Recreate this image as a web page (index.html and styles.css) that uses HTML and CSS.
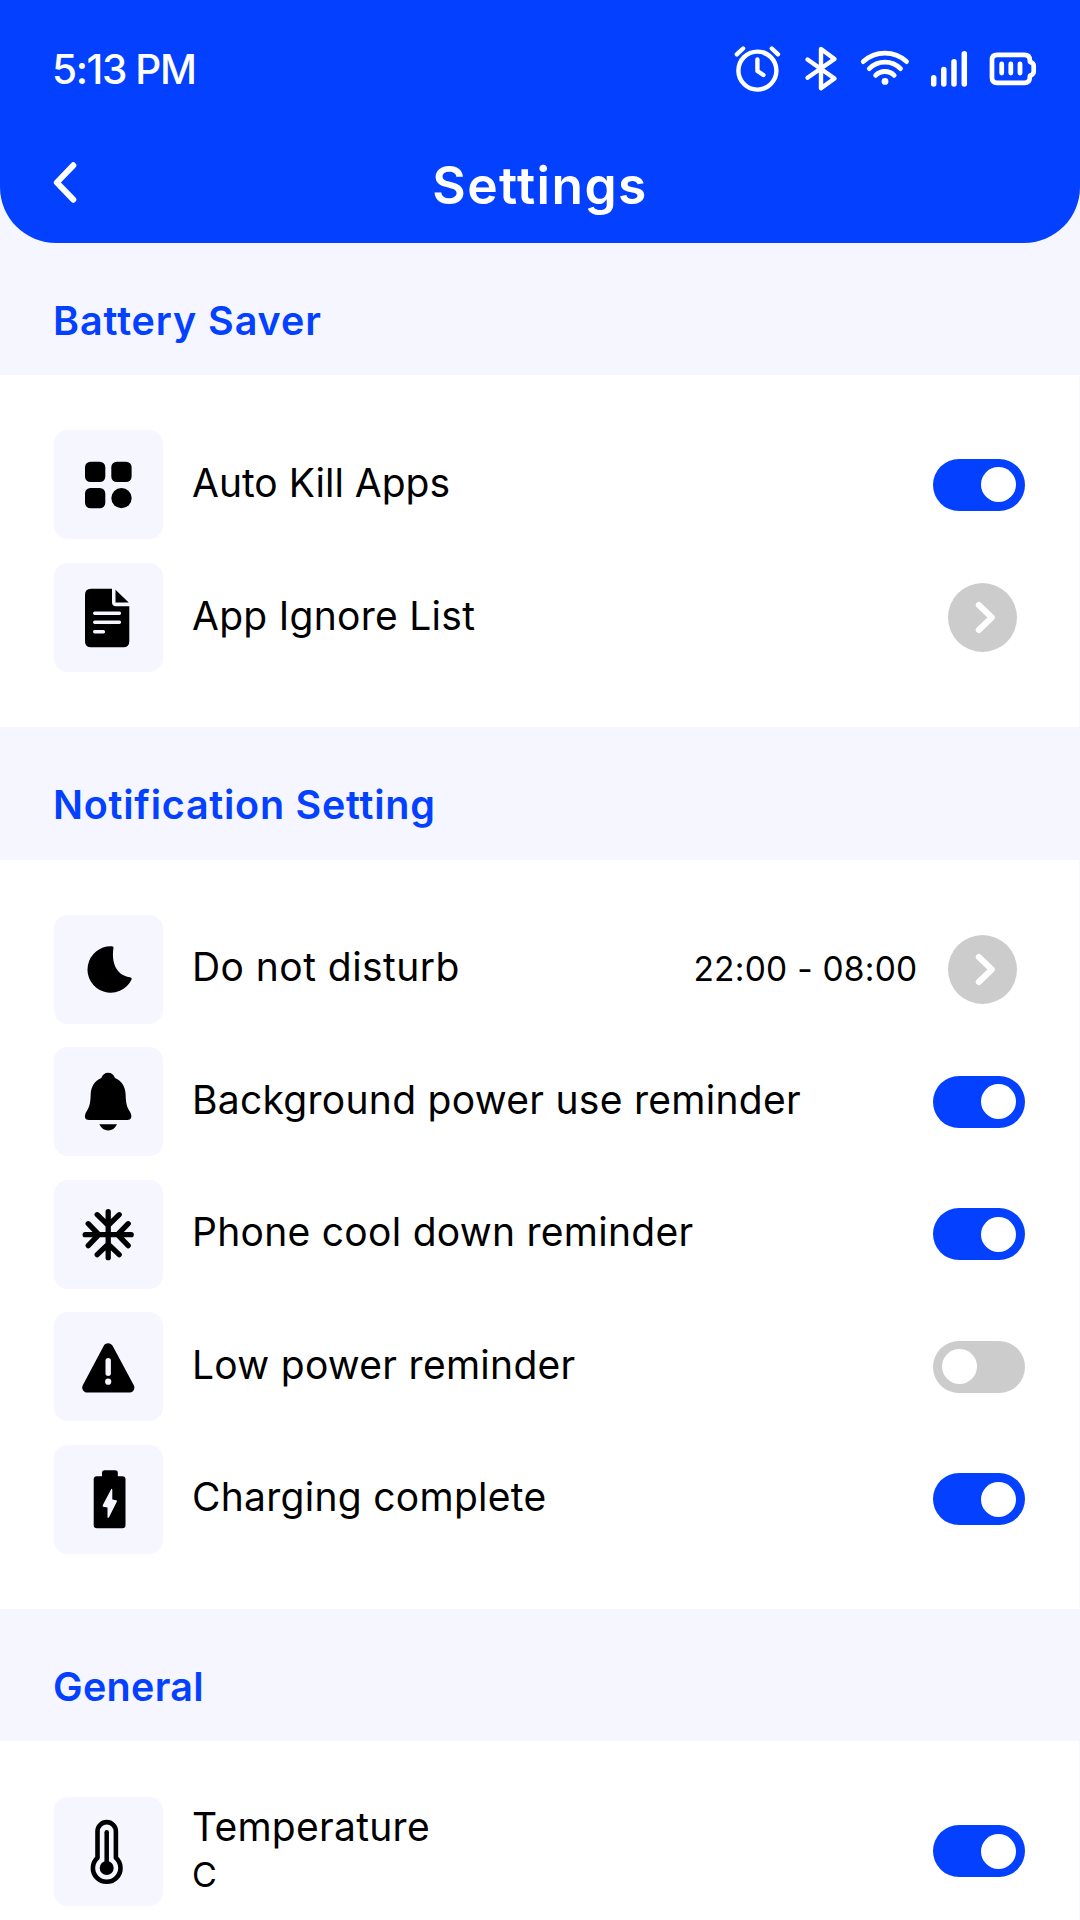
FILE: index.html
```html
<!DOCTYPE html>
<html lang="en">
<head>
  <meta charset="UTF-8">
  <title>Settings</title>
  <link rel="stylesheet" href="styles.css">
</head>
<body>

<header class="header">
  <div class="status-bar">
    <span class="time">5:13 PM</span>
    <div class="status-icons">
      <!-- alarm -->
      <svg width="48" height="46" viewBox="734 46 48 46">
        <circle cx="757.4" cy="70.6" r="19"/>
        <path d="M757.4 59.5V71l6 4M736.8 54.3l6.3-5.8M771.8 48.5l6.2 5.8"/>
      </svg>
      <!-- bluetooth -->
      <svg width="37" height="46" viewBox="802 46 37 46">
        <path d="M807.5 59.5l27 19-13.5 9.7V49l13.5 10-27 18.7"/>
      </svg>
      <!-- wifi -->
      <svg width="51" height="46" viewBox="859 46 51 46">
        <path d="M863.3 61.6a32 32 0 0 1 43.2 0M869.3 68.6a22 22 0 0 1 31.2 0M875.6 75.4a13 13 0 0 1 18.6 0" stroke-width="4.8"/>
        <circle class="solid" cx="885" cy="81.4" r="3.4"/>
      </svg>
      <!-- signal -->
      <svg width="38" height="46" viewBox="930 46 38 46">
        <path d="M933.7 77.7v6.2M943.8 69.4v14.5M954 61.7v22.2M964.3 53.7v30.2" stroke-width="5.5"/>
      </svg>
      <!-- battery -->
      <svg width="50" height="46" viewBox="988 46 50 46">
        <path d="M997 54.8h27.5q5 0 5.3 5l.2 2q3.7 1.5 3.7 4v6q0 2.5-3.7 4l-.2 2q-.3 5-5.3 5H997q-5 0-5-5V59.8q0-5 5-5z" stroke-width="4.7"/>
        <path d="M1001.7 64v9M1010.8 64v9M1020 64v9" stroke-width="4.8"/>
      </svg>
    </div>
  </div>
  <div class="nav-bar">
    <svg class="back" width="30" height="46" viewBox="0 0 30 46"><path d="M19.3 5.3L2.8 22.5l16.5 17.2"/></svg>
    <h1>Settings</h1>
  </div>
</header>

<h2 class="section-title battery">Battery Saver</h2>
<div class="section">
  <div class="row">
    <svg class="tile" viewBox="0 0 109 109">
      <rect x="31" y="31.7" width="20.3" height="20.3" rx="5.5"/>
      <rect x="57.3" y="31.7" width="20.3" height="20.3" rx="5.5"/>
      <rect x="31" y="58" width="20.3" height="20.3" rx="5.5"/>
      <circle cx="67.5" cy="68.1" r="10.2"/>
    </svg>
    <span class="label tight">Auto Kill Apps</span>
    <span class="toggle on"></span>
  </div>
  <div class="row">
    <svg class="tile" viewBox="0 0 109 109">
      <path d="M37 25.7h21v13.5q0 4 4 4h13.3v35q0 6-6 6H37q-6 0-6-6V31.7q0-6 6-6zM61.5 26.7l13.2 12.8H61.5z"/>
      <path class="cut" d="M40.7 50.3h24.7M40.7 59.3h24.7M40.7 68.7h8.7" stroke-width="3.4"/>
    </svg>
    <span class="label">App Ignore List</span>
    <svg class="arrow" viewBox="0 0 69 69"><circle cx="34.5" cy="34.5" r="34.5"/><path d="M30.8 22l13 12.5-13 12.5"/></svg>
  </div>
</div>

<h2 class="section-title notif">Notification Setting</h2>
<div class="section">
  <div class="row">
    <svg class="tile" viewBox="0 0 109 109">
      <path d="M57.5 31.3q2.2-.2 2 1.5C57.500 45 60.500 60 76 62.3q2.3.5 1.6 2.3A23.200 23.200 0 1 1 57.500 31.300z"/>
    </svg>
    <span class="label wide">Do not disturb</span>
    <span class="value">22:00 - 08:00</span>
    <svg class="arrow" viewBox="0 0 69 69"><circle cx="34.5" cy="34.5" r="34.5"/><path d="M30.8 22l13 12.5-13 12.5"/></svg>
  </div>
  <div class="row">
    <svg class="tile" viewBox="0 0 109 109">
      <path d="M54.2 25.7c3.5 0 5.5 2 6.8 5.3 7 3 10.3 9 10.6 16 .3 9 1 12.500 4.200 17.500 3 5 1.500 8.500-2.500 8.500H35c-4 0-5.500-3.500-2.500-8.500 3.200-5 3.900-8.500 4.200-17.500.3-7 3.600-13 10.600-16 1.300-3.300 3.400-5.300 6.900-5.300z"/>
      <path d="M45.3 77.3H63q-3 6.2-8.8 6.2t-8.9-6.2z"/>
    </svg>
    <span class="label">Background power use reminder</span>
    <span class="toggle on"></span>
  </div>
  <div class="row">
    <svg class="tile" viewBox="0 0 109 109">
      <path class="line" d="M54.2 31.7v46M31.2 54.7h46M43.2 34.7l11 10.6 11-10.6M43.2 74.7l11-10.6 11 10.6M34.2 43.7l10.6 11-10.6 11M74.2 43.7l-10.6 11 10.6 11" stroke-width="5.3"/>
    </svg>
    <span class="label">Phone cool down reminder</span>
    <span class="toggle on"></span>
  </div>
  <div class="row">
    <svg class="tile" viewBox="0 0 109 109">
      <path d="M54.2 36.200L33.200 75.600h42.200z" stroke="#000" stroke-width="10" stroke-linejoin="round"/>
      <path class="cut" d="M54.2 48.8v12.4" stroke-width="5.4"/>
      <circle class="dot" cx="54.2" cy="69.7" r="3.1"/>
    </svg>
    <span class="label">Low power reminder</span>
    <span class="toggle"></span>
  </div>
  <div class="row">
    <svg class="tile" viewBox="0 0 109 109">
      <rect x="48" y="25.3" width="15.8" height="12" rx="2.5"/>
      <rect x="39.7" y="31.3" width="31.8" height="52" rx="3.2"/>
      <path class="dot" d="M57.3 44q1-.6 1 1v9.5l4 .7q1 .4.5 1.5L55 72.3q-1.5 1.5-1.5-.5v-9.300l-4.300-.8q-1-.4-.5-1.500z"/>
    </svg>
    <span class="label">Charging complete</span>
    <span class="toggle on"></span>
  </div>
</div>

<h2 class="section-title general">General</h2>
<div class="section">
  <div class="row">
    <svg class="tile" viewBox="0 0 109 109">
      <path class="line" d="M43.5 60.7V34.3a9.2 9.2 0 0 1 18.4 0v26.4a13.8 13.8 0 1 1-18.4 0z" stroke-width="4.6"/>
      <path class="line" d="M52.7 35.3V71" stroke-width="4.5"/>
      <circle cx="52.7" cy="71" r="7"/>
    </svg>
    <div class="label two-line">Temperature<small>C</small></div>
    <span class="toggle on"></span>
  </div>
</div>

</body>
</html>
```
FILE: styles.css
```css
* {
  box-sizing: border-box;
}
body {
  margin: 0;
  height: 1920px;
  overflow: hidden;
  background: #f5f6ff;
  font-family: Inter, Roboto, sans-serif;
  color: #000;
}

/* header */
.header {
  height: 243px;
  background: #0340ff;
  border-radius: 0 0 56px 56px;
  color: #fff;
}
.status-bar {
  height: 137px;
  padding: 0 42px 0 52px;
  display: flex;
  align-items: center;
  justify-content: space-between;
}
.time {
  padding-top: 2px;
  font-size: 40.5px;
  font-weight: 500;
  letter-spacing: -1.4px;
}
.status-icons {
  display: flex;
  gap: 20px;
}
.status-icons svg {
  fill: none;
  stroke: #fff;
  stroke-width: 4.4;
  stroke-linecap: round;
  stroke-linejoin: round;
}
.status-icons .solid {
  fill: #fff;
  stroke: none;
}
.nav-bar {
  height: 92px;
  padding: 0 54px;
  display: grid;
  grid-template-columns: 100px 1fr 100px;
  align-items: center;
}
.back {
  overflow: visible;
  fill: none;
  stroke: #fff;
  stroke-width: 6;
  stroke-linecap: round;
  stroke-linejoin: round;
}
.nav-bar h1 {
  margin: 0;
  padding-top: 3px;
  text-align: center;
  font-size: 51.5px;
  font-weight: 600;
  letter-spacing: 1.4px;
}

/* sections */
.section-title {
  margin: 0;
  height: 132.4px;
  padding: 23px 53px 0;
  font-size: 39.5px;
  font-weight: 600;
  line-height: 110px;
  color: #0340ff;
}
.section-title.battery {
  letter-spacing: .9px;
}
.section-title.notif {
  letter-spacing: .75px;
}
.section-title.general {
  letter-spacing: .3px;
}
.section {
  padding: 55px 54px;
  background: #fff;
  border-right: 1px solid #f8f8fc;
  display: flex;
  flex-direction: column;
  gap: 23.4px;
}
.row {
  height: 109.2px;
  display: flex;
  align-items: center;
}
.tile {
  width: 109px;
  height: 109px;
  margin-right: 29px;
  border-radius: 14px;
  background: #f5f6ff;
}
.tile .line {
  fill: none;
  stroke: #000;
  stroke-linecap: round;
  stroke-linejoin: round;
}
.tile .cut {
  stroke: #f5f6ff;
  stroke-linecap: round;
}
.tile .dot {
  fill: #f5f6ff;
}
.label {
  flex: 1;
  padding-bottom: 4px;
  font-size: 39px;
  line-height: 48px;
  letter-spacing: .28px;
}
.label.tight {
  letter-spacing: 0;
}
.label.wide {
  letter-spacing: .45px;
}
.two-line {
  padding-bottom: 0;
}
.two-line small {
  display: block;
  font-size: 34px;
  line-height: 48px;
}
.value {
  margin-right: 30px;
  font-size: 33.5px;
  letter-spacing: .25px;
}
.arrow {
  width: 69px;
  height: 69px;
  margin-right: 8.5px;
  fill: #ccc;
}
.arrow path {
  fill: none;
  stroke: #fff;
  stroke-width: 6;
  stroke-linecap: round;
  stroke-linejoin: round;
}

/* switches */
.toggle {
  width: 92px;
  height: 52px;
  padding: 0 9px;
  border-radius: 26px;
  background: #ccc;
  display: flex;
  align-items: center;
}
.toggle::before {
  content: "";
  width: 35px;
  height: 35px;
  border-radius: 50%;
  background: #fff;
}
.toggle.on {
  background: #0340ff;
  justify-content: flex-end;
}
```
